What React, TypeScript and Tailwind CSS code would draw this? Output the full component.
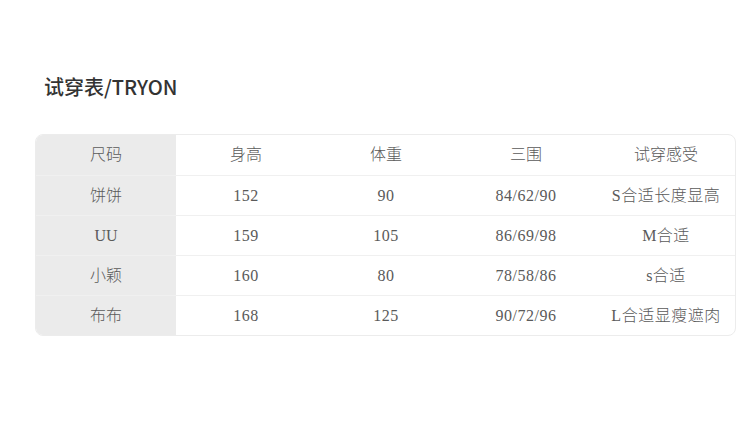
const headers = ["尺码", "身高", "体重", "三围", "试穿感受"];

const rows = [
  ["饼饼", "152", "90", "84/62/90", "S合适长度显高"],
  ["UU", "159", "105", "86/69/98", "M合适"],
  ["小颖", "160", "80", "78/58/86", "s合适"],
  ["布布", "168", "125", "90/72/96", "L合适显瘦遮肉"],
];

export default function App() {
  return (
    <div className="w-[750px] h-[448px] bg-white pt-[73px] pl-[35px]">
      <h1
        className="pl-[9px] text-[20px] font-medium text-[#333] leading-[28px]"
        style={{ fontFamily: "'Noto Sans CJK SC', 'Noto Sans', sans-serif" }}
      >
        试穿表/TRYON
      </h1>

      {/* Table */}
      <div
        className="mt-[33px] w-[701px] border border-[#ececec] rounded-[8px] overflow-hidden text-[16px] text-[#5a5a5a] font-light"
        style={{ fontFamily: "'Liberation Serif', 'Noto Sans CJK SC', serif" }}
      >
        <div className="grid grid-cols-[140px_repeat(4,140px)] h-[40px] items-center text-center">
          {headers.map((h, i) => (
            <div
              key={h}
              className={
                i === 0
                  ? "h-full flex items-center justify-center bg-[#ebebeb]"
                  : "h-full flex items-center justify-center"
              }
            >
              {h}
            </div>
          ))}
        </div>
        {rows.map((r) => (
          <div
            key={r[0]}
            className="grid grid-cols-[140px_repeat(4,140px)] h-[40px] border-t border-[#f0f0f0] text-center"
          >
            {r.map((c, i) => (
              <div
                key={i}
                className={
                  i === 0
                    ? "h-full flex items-center justify-center bg-[#ebebeb]"
                    : "h-full flex items-center justify-center tracking-[0.5px]"
                }
              >
                {c}
              </div>
            ))}
          </div>
        ))}
      </div>
    </div>
  );
}
